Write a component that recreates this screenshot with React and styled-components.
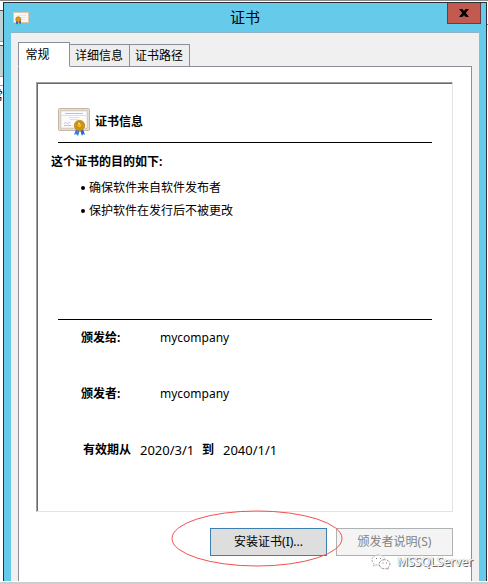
import { useState } from "react";
import styled, { createGlobalStyle } from "styled-components";

const GlobalStyle = createGlobalStyle`
  * {
    box-sizing: border-box;
  }
  body {
    margin: 0;
    background: #fff;
    color: #000;
    font-family: "Noto Sans", "Noto Sans CJK SC", sans-serif;
    font-size: 12px;
    line-height: 20px;
  }
  button {
    font: inherit;
    color: inherit;
  }
`;

const Desktop = styled.div`
  display: grid;
  grid-template-columns: 3px 1fr 1px;
  min-height: 100vh;
  padding-top: 1px;
  border-top: 1px solid #8a8a8a;
  border-bottom: 2px solid #cdcdcd;
`;

const BackWindow = styled.div`
  overflow: hidden;
  padding-top: 8px;
`;

const BackPanel = styled.div`
  height: 32px;
  margin-bottom: 3px;
  border-top: 1px solid #555;
  border-bottom: 1px solid #999;
  background: #bfd3d5;
`;

const BackText = styled.div`
  display: flex;
  justify-content: flex-end;
  margin-top: 8px;
  border-top: 1px solid #999;
  white-space: nowrap;
`;

const BackEdge = styled.div`
  height: 15px;
  border-bottom: 1px solid #777;
`;

const Dialog = styled.div`
  display: flex;
  flex-direction: column;
  margin-bottom: 1px;
  padding: 0 7px;
  border: 1px solid #2b3038;
  border-bottom: 0;
  background: #66cbea;
`;

const TitleBar = styled.header`
  display: grid;
  grid-template-columns: 1fr auto 1fr;
  height: 29px;
`;

const TitleIcon = styled.div`
  padding: 9px 2px;
  line-height: 0;
`;

const Title = styled.h1`
  margin: 0;
  font-size: 15px;
  font-weight: 400;
  line-height: 29px;
`;

const CloseButton = styled.button`
  display: flex;
  align-items: center;
  justify-content: center;
  justify-self: end;
  width: 34px;
  height: 21px;
  margin-right: -2px;
  padding: 0;
  border: 1px solid #6b3b40;
  border-top: 0;
  background: #c35a50;
`;

const Content = styled.main`
  flex: 1;
  display: flex;
  flex-direction: column;
  padding: 9px 7px 0;
  border-top: 1px solid #8fb3c0;
  background: #f0f0f0;
`;

const TabList = styled.div`
  display: flex;
  align-items: flex-end;
`;

const Tab = styled.button`
  height: ${(props) => (props.$active ? 25 : 23)}px;
  width: ${(props) => (props.$active ? 52 : 61)}px;
  margin-right: -1px;
  margin-bottom: -1px;
  padding: 0 ${(props) => (props.$active ? 13 : 1)}px 0 0;
  position: relative;
  z-index: ${(props) => (props.$active ? 1 : 0)};
  border: 1px solid #8c8e9a;
  border-bottom-color: ${(props) => (props.$active ? "#fff" : "#8c8e9a")};
  background: ${(props) => (props.$active ? "#fff" : "#eee")};
  line-height: 20px;
  white-space: nowrap;
`;

const TabPanel = styled.section`
  flex: 1;
  display: flex;
  flex-direction: column;
  padding: 15px 18px 25px 17px;
  border: 1px solid #8c8e9a;
  border-bottom: 0;
  background: #fff;
`;

const Frame = styled.div`
  flex: 1;
  display: flex;
  flex-direction: column;
  padding: 25px 20px 0 14px;
  border: 1px solid #e3e3e3;
  border-top-color: #a0a0a0;
  border-left-color: #a0a0a0;
  box-shadow: inset 1px 1px #696969;
`;

const Heading = styled.div`
  display: flex;
  gap: 5px;
  height: 35px;
  margin-left: 7px;
  border-bottom: 1px solid #000;
`;

const HeadingText = styled.h2`
  margin: 0;
  font-size: 12px;
  line-height: 28px;
`;

const Purposes = styled.div`
  flex: 1;
  padding: 9px 0;
`;

const PurposeTitle = styled.h3`
  margin: 0;
  font-size: 12px;
`;

const PurposeList = styled.ul`
  margin: 4px 0 0;
  padding: 0 0 0 30px;
  list-style: none;
  line-height: 23px;
`;

const Purpose = styled.li`
  display: flex;
  align-items: center;
  gap: 4px;

  &::before {
    content: "";
    width: 4px;
    height: 4px;
    border-radius: 50%;
    background: #000;
  }
`;

const Details = styled.dl`
  display: flex;
  flex-direction: column;
  gap: 36px;
  margin: 0 0 0 7px;
  padding: 8px 0 51px 23px;
  border-top: 1px solid #000;
`;

const Detail = styled.div`
  display: grid;
  grid-template-columns: 79px 1fr;
`;

const Validity = styled.div`
  display: grid;
  grid-template-columns: 57px 62px 21px 1fr;
  padding-left: 2px;
`;

const Term = styled.dt`
  font-weight: 700;
`;

const Value = styled.dd`
  margin: 0;
`;

const DateValue = styled(Value)`
  font-family: "Noto Sans", sans-serif;
  font-size: 13px;
`;

const Actions = styled.div`
  position: relative;
  display: flex;
  justify-content: flex-end;
  gap: 9px;
  margin-top: 16px;
`;

const ActionWrap = styled.div`
  position: relative;
`;

const ActionButton = styled.button`
  width: 117px;
  height: 28px;
  padding: 0;
  border: 1px solid #3c7fb1;
  background: #dedede;

  &:disabled {
    border-color: #adb2b5;
    background: #f4f4f4;
    color: #838383;
  }
`;

const Highlight = styled.svg`
  position: absolute;
  z-index: 1;
  top: -18px;
  left: -39px;
  width: 172px;
  height: 57px;
  pointer-events: none;
`;

const Watermark = styled.div`
  position: absolute;
  right: -20px;
  bottom: -16px;
  display: flex;
  align-items: center;
  gap: 6px;
  color: #fff;
  font-size: 12px;
  text-shadow: 1px 1px 0 #666, 0 0 1px #888;
  pointer-events: none;
`;

function CertificateIcon() {
  return (
    <svg width="32" height="29" viewBox="0 0 32 29" aria-hidden="true">
      <rect x=".5" y=".5" width="31" height="22" rx="1" fill="#ddd0bf" stroke="#c2b7a8" />
      <rect x="1.5" y="1.5" width="29" height="20" fill="none" stroke="#f1e9dd" strokeDasharray="1 1" />
      <rect x="3" y="3" width="26" height="17" fill="#fafbfe" stroke="#c9c5c3" strokeWidth=".5" />
      <path d="M7 5.500h18" stroke="#a9b3d4" strokeWidth=".8" />
      <path d="M4 7.500h24M11 9.500h10M12 11.500h8" stroke="#d3d8e8" strokeWidth=".8" />
      <path d="M6 15.500l2-1 1 1 3-1M6 17.500h7" fill="none" stroke="#b5b6bb" strokeWidth=".8" />
      <path d="M18 21l-2 6 2-1 2 2 2-6z" fill="#347ee8" />
      <path d="M22 22l2 6 1-2 2 1-2-6z" fill="#2568d4" />
      <circle cx="21.500" cy="17.500" r="5.200" fill="#d49612" stroke="#bb7c08" strokeWidth=".7" />
      <circle cx="21.500" cy="17.300" r="2.800" fill="#e9b52e" stroke="#ae7610" strokeWidth=".8" />
      <path d="M20 16l2-1" stroke="#fff0a2" />
    </svg>
  );
}

function SmallCertificateIcon() {
  return (
    <svg width="16" height="13" viewBox="0 0 16 13" aria-hidden="true">
      <rect x=".5" y=".5" width="15" height="10" fill="#f8f7f7" stroke="#dfc6a7" />
      <path d="M4 3.500h9M8 5.500h5M8 7.500h4" stroke="#e6e7ec" />
      <path d="M3 8h2v4.500l-2-1zM6 8h2v4l-2-1z" fill="#2866ce" />
      <circle cx="5.300" cy="7.300" r="2.600" fill="#d69b13" stroke="#a87108" strokeWidth=".6" />
    </svg>
  );
}

function ChatIcon() {
  return (
    <svg width="20" height="17" viewBox="0 0 20 17" aria-hidden="true">
      <path
        d="M7.500 1C3.500 1 1 3.300 1 6c0 1.800 1 3 2.200 3.900L2.500 12l2.600-1.200c1 .3 2 .4 3 .3"
        fill="#fff"
        stroke="#aaa"
        strokeDasharray="2 1"
      />
      <path d="M7.500 1c3.300 0 5.800 1.800 6.300 4.300" fill="#fff" stroke="#ccc" strokeDasharray="2 1" />
      <path
        d="M13.500 5.700c-3.200 0-5.300 2-5.300 4.500s2.200 4.600 5.300 4.600c.7 0 1.300-.1 1.900-.3l2.100 1-.5-1.900c1.200-.9 2-2 2-3.400 0-2.500-2.300-4.500-5.500-4.500z"
        fill="#fff"
        stroke="#999"
        strokeDasharray="3 1"
      />
      <path d="M5 4.500h1M9 4.500h1M11.500 9h1M15 9h1" stroke="#777" />
    </svg>
  );
}

const tabs = ["常规", "详细信息", "证书路径"];
const purposes = ["确保软件来自软件发布者", "保护软件在发行后不被更改"];

function App() {
  const [activeTab, setActiveTab] = useState(tabs[0]);

  return (
    <>
      <GlobalStyle />
      <Desktop>
        <BackWindow>
          <BackPanel />
          <BackPanel />
          <BackText>常</BackText>
        </BackWindow>
        <Dialog role="dialog" aria-labelledby="dialog-title">
          <TitleBar>
            <TitleIcon>
              <SmallCertificateIcon />
            </TitleIcon>
            <Title id="dialog-title">证书</Title>
            <CloseButton aria-label="关闭">
              <svg width="10" height="8" viewBox="0 0 10 8" aria-hidden="true">
                <path d="M0 0h3.500L5 2l1.500-2H10L6.800 4 10 8H6.500L5 6 3.500 8H0l3.200-4z" />
              </svg>
            </CloseButton>
          </TitleBar>
          <Content>
            <TabList role="tablist">
              {tabs.map((tab) => (
                <Tab
                  key={tab}
                  role="tab"
                  aria-selected={tab === activeTab}
                  $active={tab === activeTab}
                  onClick={() => setActiveTab(tab)}
                >
                  {tab}
                </Tab>
              ))}
            </TabList>
            <TabPanel role="tabpanel">
              <Frame>
                <Heading>
                  <CertificateIcon />
                  <HeadingText>证书信息</HeadingText>
                </Heading>
                <Purposes>
                  <PurposeTitle>这个证书的目的如下:</PurposeTitle>
                  <PurposeList>
                    {purposes.map((purpose) => (
                      <Purpose key={purpose}>{purpose}</Purpose>
                    ))}
                  </PurposeList>
                </Purposes>
                <Details>
                  <Detail>
                    <Term>颁发给:</Term>
                    <Value>mycompany</Value>
                  </Detail>
                  <Detail>
                    <Term>颁发者:</Term>
                    <Value>mycompany</Value>
                  </Detail>
                  <Validity>
                    <Term>有效期从</Term>
                    <DateValue>2020/3/1</DateValue>
                    <Term>到</Term>
                    <DateValue>2040/1/1</DateValue>
                  </Validity>
                </Details>
              </Frame>
              <Actions>
                <ActionWrap>
                  <ActionButton>安装证书(I)...</ActionButton>
                  <Highlight viewBox="0 0 172 57" aria-hidden="true">
                    <ellipse cx="86" cy="28.500" rx="85" ry="27.500" fill="none" stroke="#f25050" />
                  </Highlight>
                </ActionWrap>
                <ActionButton disabled>颁发者说明(S)</ActionButton>
                <Watermark>
                  <ChatIcon />
                  <span>MSSQLServer</span>
                </Watermark>
              </Actions>
            </TabPanel>
          </Content>
        </Dialog>
        <BackWindow as="aside">
          <BackEdge />
        </BackWindow>
      </Desktop>
    </>
  );
}

export default App;
